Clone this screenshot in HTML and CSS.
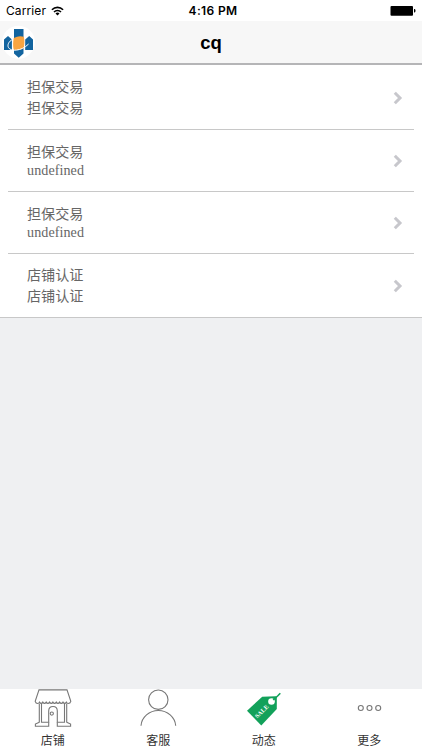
FILE: index.html
```html
<!DOCTYPE html>
<html lang="zh-CN">
<head>
  <meta charset="utf-8" />
  <meta name="viewport" content="width=device-width, initial-scale=1" />
  <title>cq</title>
  <link rel="stylesheet" href="styles.css">
</head>
<body>
  <!-- 状态栏 -->
  <div class="status-bar">
    <div class="carrier">
      <span>Carrier</span>
      <svg class="wifi" width="13" height="10" viewBox="0 0 13 10">
        <path d="M.9 3.7a8 8 0 0 1 11.2 0M3 6a5 5 0 0 1 7 0" fill="none" stroke="#000" stroke-width="1.6"/>
        <path d="M4.5 7.4a2.9 2.9 0 0 1 4 0l-2 2.1z"/>
      </svg>
    </div>
    <div class="time">4:16 PM</div>
    <svg class="battery" width="26" height="12" viewBox="0 0 26 12">
      <rect x=".5" y="1" width="22.5" height="9.8" rx="1"/>
      <path d="M24 4h.5q1 .2 1 1.8t-1 1.8H24z"/>
    </svg>
  </div>

  <!-- 标题栏 -->
  <header class="header">
    <svg class="logo" width="38" height="40" viewBox="0 0 38 40">
      <circle cx="18.5" cy="20.2" r="16.5" fill="#fff"/>
      <path d="M14 7h9.5v24.5l-4.8 4.3-4.7-4.3z" fill="#12649f"/>
      <path d="M8 14l3.9 3.5V28H4V17.5zM29.2 14l3.8 3.5V28h-7.8V17.5z" fill="#12649f"/>
      <path d="M13.8 16q5-2.6 10-1.2c1 4 .8 8-.4 11.6q-5 2.6-9.8 1c-.8-4-.6-8 .2-11.4z" fill="#f9a541"/>
      <path d="M12.6 17.4C8.6 19.4 7.2 23 8.4 25.4C10.4 29.6 21 29.6 28.6 22" fill="none" stroke="#fff" stroke-width="1"/>
    </svg>
    <h1 class="title">cq</h1>
  </header>

  <!-- 动态列表 -->
  <ul class="list">
    <li class="item tall">
      <div class="text"><p>担保交易</p><p>担保交易</p></div>
      <svg class="arrow" width="10" height="14" viewBox="0 0 10 14"><path d="M1.8 1.8L7 7l-5.2 5.2"/></svg>
    </li>
    <li class="item">
      <div class="text"><p>担保交易</p><p class="latin">undefined</p></div>
      <svg class="arrow" width="10" height="14" viewBox="0 0 10 14"><path d="M1.8 1.8L7 7l-5.2 5.2"/></svg>
    </li>
    <li class="item">
      <div class="text"><p>担保交易</p><p class="latin">undefined</p></div>
      <svg class="arrow" width="10" height="14" viewBox="0 0 10 14"><path d="M1.8 1.8L7 7l-5.2 5.2"/></svg>
    </li>
    <li class="item last">
      <div class="text"><p>店铺认证</p><p>店铺认证</p></div>
      <svg class="arrow" width="10" height="14" viewBox="0 0 10 14"><path d="M1.8 1.8L7 7l-5.2 5.2"/></svg>
    </li>
  </ul>

  <!-- 底部导航 -->
  <nav class="tabs">
    <a class="tab">
      <svg class="icon" width="40" height="40" viewBox="0 0 40 40">
        <path d="M6 .9h28l3.8 11.4q-.6 2.2-2.6 2.2q-1.2 0-1.8-1.4q-1.7 2.6-3.4 0q-1.7 2.6-3.4 0q-1.6 2.6-3.3 0q-1.7 2.6-3.4 0q-1.6 2.6-3.3 0q-1.7 2.6-3.4 0q-1.7 2.6-3.4 0q-1.6 2.6-3.3 0q-.6 1.4-1.8 1.4q-1.9 0-2.5-2.2z"/>
        <path d="M6.3 14.5v19M8.5 14.5v18.7h7.2V22q0-4.5 4.3-4.5t4.3 4.5v11.2h7.2V14.5M33.7 14.5v19"/>
        <path d="M6.3 33.3l-3.9 1.8v2.1h13.3v-4M33.7 33.3l3.9 1.8v2.1H24.3v-4"/>
        <circle cx="18.8" cy="24.6" r="1.6"/>
      </svg>
      <span>店铺</span>
    </a>
    <a class="tab">
      <svg class="icon" width="40" height="40" viewBox="0 0 40 40">
        <circle cx="20.3" cy="10.7" r="9.7"/>
        <path d="M3 36.7a17.4 16.4 0 0 1 34.7 0"/>
      </svg>
      <span>客服</span>
    </a>
    <a class="tab">
      <svg class="icon sale" width="40" height="40" viewBox="0 0 40 40">
        <path class="tag" d="M3 21.8L18.2 7.7l13.6-.5 1 1V20L17.3 36.5z"/>
        <circle class="hole" cx="27.5" cy="12.5" r="3.3"/>
        <path class="string" d="M29.2 10.8l4.4-3.8 2.7-2.8"/>
        <text x="13.2" y="29.6" textLength="16.5" lengthAdjust="spacingAndGlyphs" transform="rotate(-44 13.2 29.6)">SALE</text>
      </svg>
      <span>动态</span>
    </a>
    <a class="tab">
      <svg class="icon" width="40" height="40" viewBox="0 0 40 40">
        <circle cx="11.8" cy="19" r="2.5"/>
        <circle cx="20.5" cy="19" r="2.5"/>
        <circle cx="29.2" cy="19" r="2.5"/>
      </svg>
      <span>更多</span>
    </a>
  </nav>
</body>
</html>
```

FILE: styles.css
```css
* {
  box-sizing: border-box;
}
body {
  display: flex;
  flex-direction: column;
  height: 750px;
  margin: 0;
  background: #eff0f2;
  font-family: "Liberation Serif", "Noto Sans CJK SC", serif;
  overflow: hidden;
}
.status-bar {
  display: grid;
  grid-template-columns: 1fr auto 1fr;
  align-items: center;
  height: 21px;
  padding: 1px 6px 0;
  background: #fff;
  font: 12px/20px Inter, sans-serif;
  letter-spacing: 0.1px;
  color: #000;
}
.carrier {
  display: flex;
  align-items: center;
  gap: 5px;
}
.time {
  font-weight: 600;
  letter-spacing: 0.35px;
  padding-left: 4px;
}
.battery {
  justify-self: end;
}
.header {
  display: grid;
  grid-template-columns: 38px 1fr 38px;
  align-items: center;
  height: 44px;
  background: #f7f7f7;
  border-bottom: 2px solid #b5b5b7;
}
.title {
  margin: 0;
  padding-top: 1px;
  text-align: center;
  font: bold 18.5px/22px "Liberation Sans", sans-serif;
}
.list {
  margin: 0;
  padding: 1px 8px 0;
  list-style: none;
  background: #fff;
  border-bottom: 1px solid #c8c8c8;
}
.item {
  display: flex;
  align-items: center;
  justify-content: space-between;
  height: 62px;
  padding: 0 11px 0 19px;
  border-bottom: 1px solid #c8c8c8;
}
.item.tall {
  height: 64px;
}
.item.last {
  height: 63px;
  border-bottom: 0;
}
.text p {
  margin: 0;
  font-size: 14.1px;
  line-height: 20.5px;
  color: #666;
}
.text .latin {
  line-height: 17px;
  letter-spacing: 0.08px;
}
.arrow path {
  fill: none;
  stroke: #c7c7cc;
  stroke-width: 3;
}
.tabs {
  display: flex;
  height: 61px;
  margin-top: auto;
  background: #fff;
}
.tab {
  flex: 1;
  display: flex;
  flex-direction: column;
  align-items: center;
  font: 12px/18px "Noto Sans CJK SC", sans-serif;
  color: #333;
}
.tab span {
  margin-top: 2px;
}
.icon {
  fill: none;
  stroke: #777;
  stroke-width: 1.1;
}
.sale {
  stroke: none;
}
.tag {
  fill: #12a15a;
}
.hole {
  fill: #fff;
}
.string {
  stroke: #12a15a;
  stroke-width: 1.6;
}
.sale text {
  fill: #fff;
  font: bold 6px "Liberation Serif", serif;
}
```
